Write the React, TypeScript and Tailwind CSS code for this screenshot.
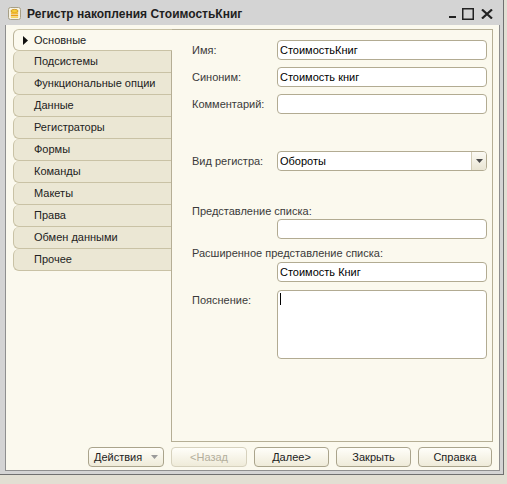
import React from "react";

const tabs = [
  "Основные",
  "Подсистемы",
  "Функциональные опции",
  "Данные",
  "Регистраторы",
  "Формы",
  "Команды",
  "Макеты",
  "Права",
  "Обмен данными",
  "Прочее",
];

function Input({ value, className = "" }: { value?: string; className?: string }) {
  return (
    <div
      className={
        "h-[20px] w-[210px] rounded-[4px] border border-[#b2ab92] bg-white pl-[2px] flex items-center text-black leading-none " +
        className
      }
    >
      {value}
    </div>
  );
}

function Btn({ children, disabled, className = "" }: { children: React.ReactNode; disabled?: boolean; className?: string }) {
  return (
    <div
      className={
        "h-[20px] rounded-[4px] border flex items-center justify-center bg-linear-to-b from-[#fffef9] to-[#efebd9] " +
        (disabled ? "border-[#d6d1bd] text-[#b3ae9c] " : "border-[#aaa48c] text-[#222] ") +
        className
      }
    >
      {children}
    </div>
  );
}

export default function App() {
  return (
    <div className="w-[507px] h-[484px] bg-[#e2dfd3] font-['Liberation_Sans',Arial,sans-serif] text-[11px] overflow-hidden">
      <div className="w-[504px] h-[475px] bg-[#d4d4d4] border-r border-b border-[#707070] flex flex-col pl-[5px] pr-[3px] pb-[3px]">
        {/* title bar */}
        <div className="h-[25px] -ml-[5px] flex items-center pl-[8px] pr-[7px] pt-[2px] shrink-0">
          <svg width="13" height="13" viewBox="0 0 13 13" className="shrink-0">
            <rect x="0.5" y="0.5" width="12" height="12" rx="2" fill="#f6f2e2" stroke="#a79f86" />
            <ellipse cx="6.5" cy="4" rx="3.6" ry="1.6" fill="#f5cf3a" stroke="#c98a10" strokeWidth="0.8" />
            <rect x="2.9" y="5.3" width="7.2" height="1.6" fill="#f2b624" />
            <rect x="2.9" y="7.6" width="7.2" height="1.6" fill="#e99d18" />
            <rect x="2.9" y="9.6" width="7.2" height="1.2" fill="#f5cf3a" />
          </svg>
          <div className="ml-[6px] font-bold text-[12px] text-[#1e1e1e] whitespace-nowrap">
            Регистр накопления СтоимостьКниг
          </div>
          <div className="flex-1" />
          <svg width="7" height="3" viewBox="0 0 7 3" className="mt-[8px]">
            <rect x="0" y="0" width="7" height="2" fill="#222" />
          </svg>
          <svg width="12" height="12" viewBox="0 0 12 12" className="ml-[6px]">
            <rect x="0.75" y="0.75" width="10.5" height="10.5" fill="none" stroke="#222" strokeWidth="1.5" />
          </svg>
          <svg width="12" height="10" viewBox="0 0 12 10" className="ml-[7px]">
            <path d="M1 0.5 L11 9.5 M11 0.5 L1 9.5" stroke="#222" strokeWidth="2.2" />
          </svg>
        </div>

        {/* body */}
        <div className="flex-1 border border-t-0 border-[#8f8f8f] bg-[#fbf9ee] flex flex-col pt-[4px] pl-[7px] pr-[6px] pb-[3px] min-h-0">
          <div className="flex flex-1 min-h-0">
            {/* tabs */}
            <div className="w-[158px] shrink-0 flex flex-col">
              {tabs.map((t, i) => {
                const sel = i === 0;
                return (
                  <div
                    key={t}
                    className={
                      "h-[22px] flex items-center rounded-l-[6px] border-l border-b border-[#c9c2a5] text-[#222] " +
                      (i === 0 ? "border-t " : "") +
                      (sel
                        ? "w-[159px] relative z-10 bg-[#fbf9ee] pl-[9px] border-l-[#b9b298]"
                        : "w-[158px] bg-[#ebe7d4] pl-[20px]")
                    }
                  >
                    {sel && (
                      <svg width="5" height="9" viewBox="0 0 5 9" className="mr-[6px]">
                        <path d="M0 0 L5 4.5 L0 9 Z" fill="#111" />
                      </svg>
                    )}
                    {t}
                  </div>
                );
              })}
            </div>

            {/* panel */}
            <div className="flex-1 border border-[#b5ae95] bg-[#fbf9ee] pl-[20px] pr-[5px] pt-[10px] flex flex-col text-[#3a3a3a]">
              <div className="flex items-center">
                <div className="w-[85px]">Имя:</div>
                <Input value="СтоимостьКниг" />
              </div>
              <div className="flex items-center mt-[7px]">
                <div className="w-[85px]">Синоним:</div>
                <Input value="Стоимость книг" />
              </div>
              <div className="flex items-center mt-[7px]">
                <div className="w-[85px]">Комментарий:</div>
                <Input />
              </div>
              <div className="flex items-center mt-[37px]">
                <div className="w-[85px]">Вид регистра:</div>
                <div className="h-[20px] w-[210px] rounded-[4px] border border-[#b2ab92] bg-white flex items-stretch text-black overflow-hidden">
                  <div className="flex-1 pl-[2px] flex items-center">Обороты</div>
                  <div className="w-[15px] border-l border-[#d2ccb6] bg-linear-to-b from-[#fbfaf4] to-[#e9e5d3] flex items-center justify-center">
                    <svg width="7" height="4" viewBox="0 0 7 4">
                      <path d="M0 0 L7 0 L3.5 4 Z" fill="#4a4a4a" />
                    </svg>
                  </div>
                </div>
              </div>
              <div className="mt-[33px] h-[14px] leading-[14px]">Представление списка:</div>
              <div className="pl-[85px] mt-[1px]">
                <Input className="h-[19px]" />
              </div>
              <div className="mt-[7px] h-[14px] leading-[14px]">Расширенное представление списка:</div>
              <div className="pl-[85px] mt-[2px]">
                <Input value="Стоимость Книг" className="h-[19px]" />
              </div>
              <div className="flex items-start mt-[8px]">
                <div className="w-[85px] pt-[2px]">Пояснение:</div>
                <div className="h-[69px] w-[210px] rounded-[4px] border border-[#b2ab92] bg-white pl-[2px] pt-[2px]">
                  <div className="w-[1px] h-[12px] bg-black" />
                </div>
              </div>
            </div>
          </div>

          {/* buttons */}
          <div className="mt-[5px] h-[20px] flex justify-end gap-[7px] pr-[1px] shrink-0">
            <div className="w-[76px] h-[20px] rounded-[4px] border border-[#aaa48c] bg-linear-to-b from-[#fffef9] to-[#efebd9] flex items-center justify-between pl-[5px] pr-[5px] text-[#222]">
              <span>Действия</span>
              <svg width="7" height="4" viewBox="0 0 7 4">
                <path d="M0 0 L7 0 L3.5 4 Z" fill="#9a9a9a" />
              </svg>
            </div>
            <Btn disabled className="w-[76px]">&lt;Назад</Btn>
            <Btn className="w-[75px]">Далее&gt;</Btn>
            <Btn className="w-[75px]">Закрыть</Btn>
            <Btn className="w-[74px]">Справка</Btn>
          </div>
        </div>
      </div>
    </div>
  );
}
